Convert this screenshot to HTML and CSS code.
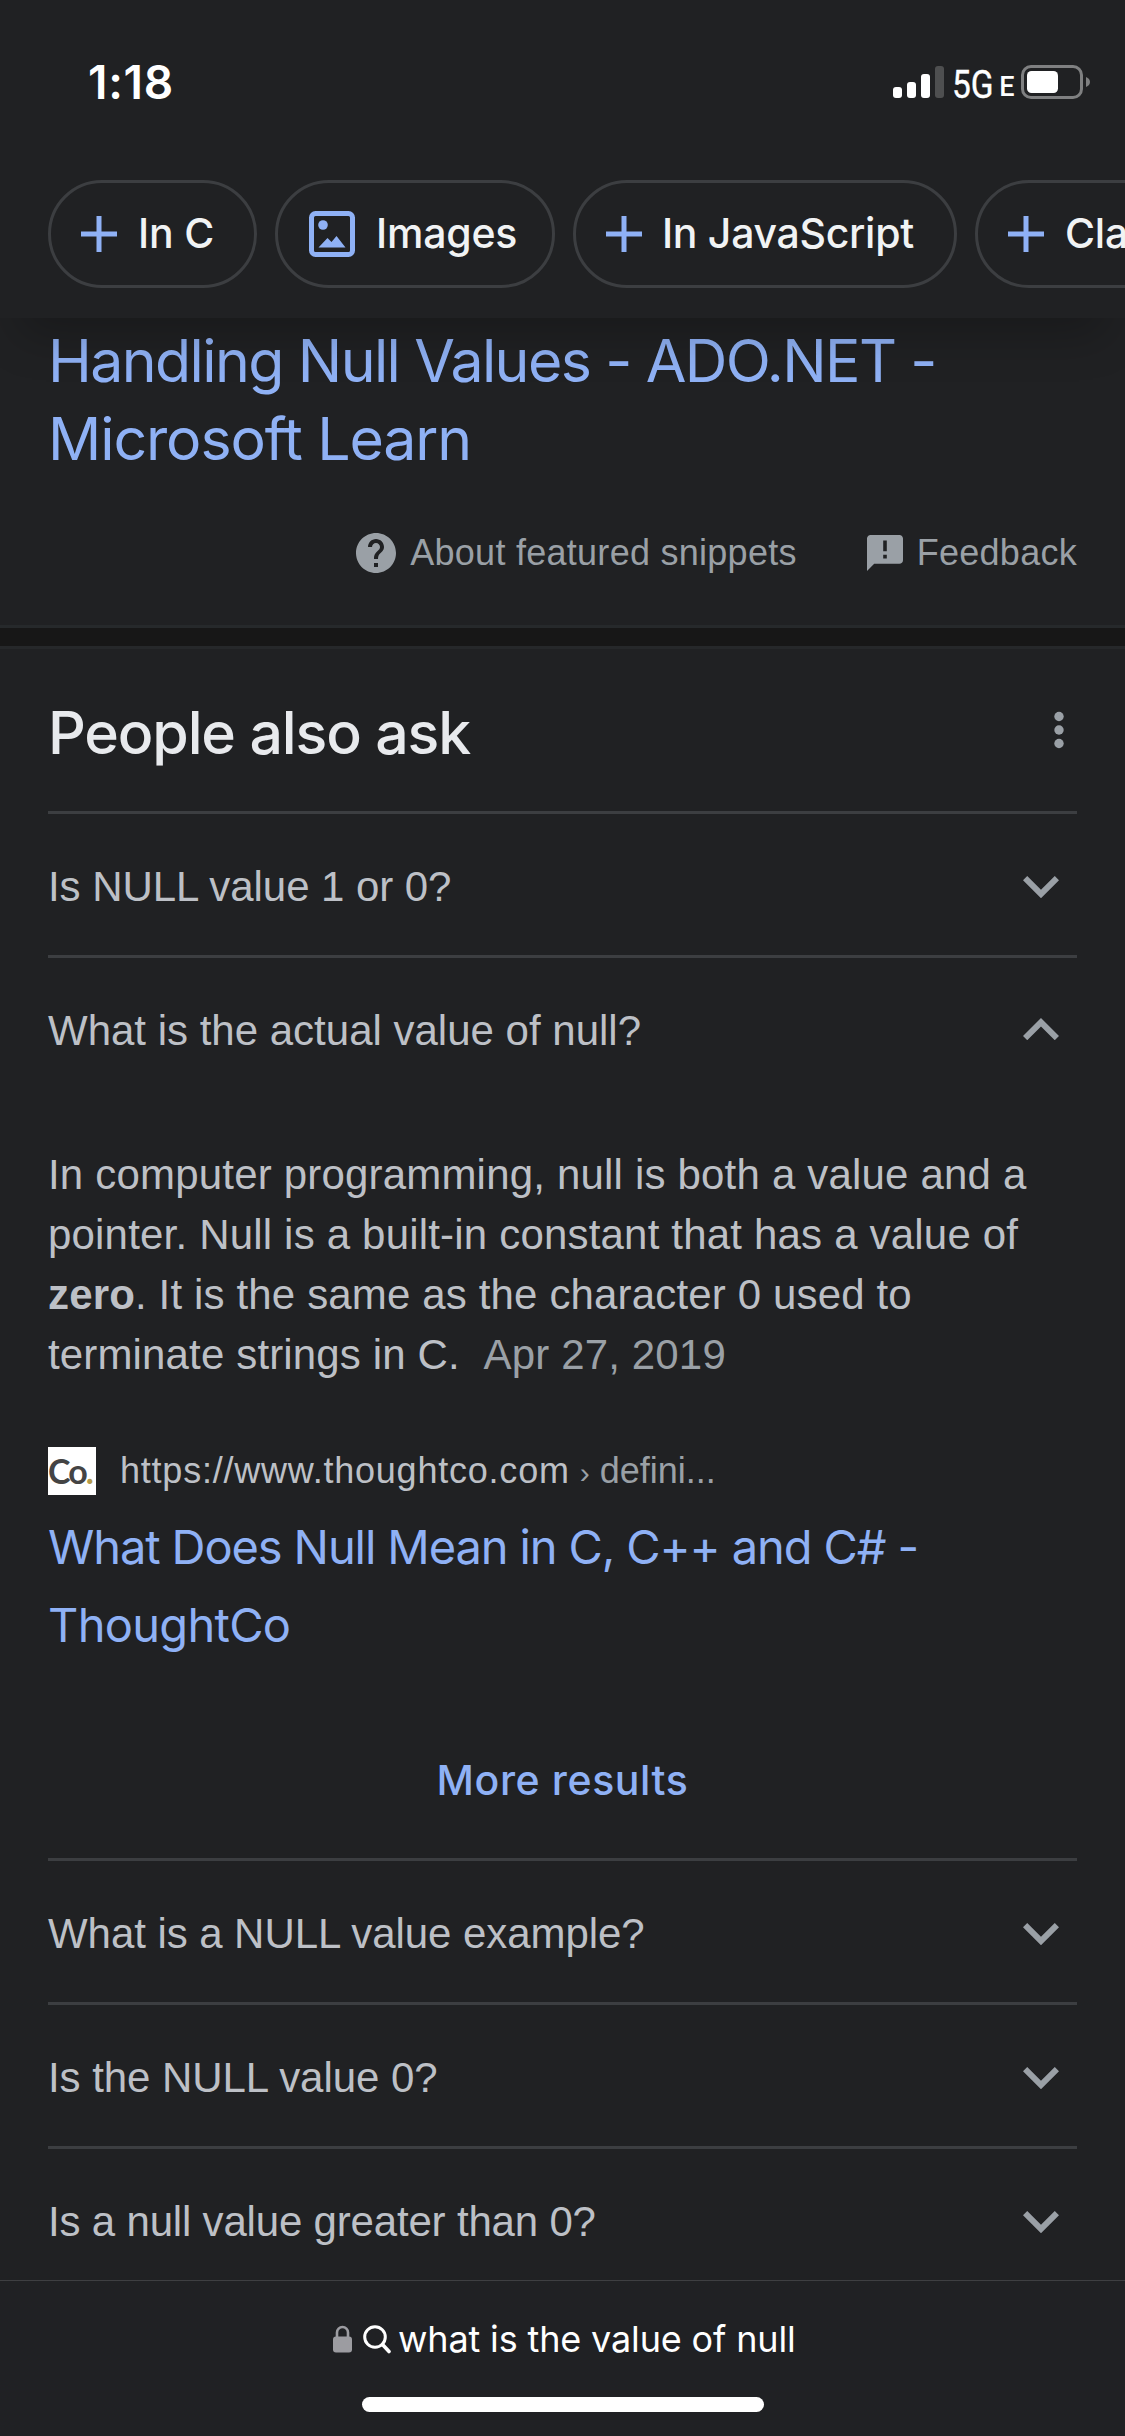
FILE: index.html
```html
<!DOCTYPE html>
<html lang="en">
<head>
<meta charset="utf-8">
<title>what is the value of null</title>
<link rel="stylesheet" href="styles.css">
</head>
<body>
<div class="screen">
  <header class="top">
    <div class="status">
      <span class="clock">1:18</span>
      <div class="indicators">
        <svg class="signal" width="52" height="34" viewBox="0 0 52 34" fill="#fff">
          <rect x="0" y="22" width="9" height="11" rx="3"/>
          <rect x="14" y="17" width="9" height="16" rx="3"/>
          <rect x="28" y="9" width="9" height="24" rx="3"/>
          <rect x="42" y="1" width="9" height="32" rx="3" fill="#4e4f50"/>
        </svg>
        <span class="network">5G</span><span class="network-e">E</span>
        <svg class="battery" width="70" height="34" viewBox="0 0 70 34">
          <rect x="1.5" y="1.5" width="59" height="31" rx="8.5" fill="none" stroke="#7f8081" stroke-width="3"/>
          <rect x="6" y="6" width="31" height="22" rx="4.5" fill="#fff"/>
          <path d="M65 12c2.600 1 4 2.800 4 5s-1.400 4-4 5z" fill="#7f8081"/>
        </svg>
      </div>
    </div>
    <nav class="chips">
      <a class="chip chip-c"><svg class="plus" viewBox="0 0 36 36"><path d="M18 0v36M0 18h36"/></svg><span>In C</span></a>
      <a class="chip chip-images">
        <svg class="picture" viewBox="0 0 46 46">
          <rect x="2.500" y="2.500" width="41" height="41" rx="4" fill="none" stroke="#8fb1f5" stroke-width="5"/>
          <circle cx="14" cy="14" r="4.800" fill="#8fb1f5"/>
          <path d="M9.500 36.500l9-9.500 4 4 5-6 9 11.500z" fill="#8fb1f5"/>
        </svg><span>Images</span></a>
      <a class="chip chip-js"><svg class="plus" viewBox="0 0 36 36"><path d="M18 0v36M0 18h36"/></svg><span>In JavaScript</span></a>
      <a class="chip chip-class"><svg class="plus" viewBox="0 0 36 36"><path d="M18 0v36M0 18h36"/></svg><span>Class</span></a>
    </nav>
  </header>

  <main>
    <section class="snippet">
      <a class="snippet-title"><span class="t1">Handling Null Values - ADO.NET -</span><br><span class="t2">Microsoft Learn</span></a>
      <div class="snippet-links">
        <a class="about"><svg width="40" height="40" viewBox="2 2 20 20" fill="#9aa0a6"><path d="M12 2C6.480 2 2 6.480 2 12s4.480 10 10 10 10-4.480 10-10S17.520 2 12 2zm1 17h-2v-2h2v2zm2.070-7.750l-.9.920C13.450 12.900 13 13.500 13 15h-2v-.5c0-1.100.45-2.100 1.170-2.830l1.240-1.260c.37-.36.59-.86.59-1.410 0-1.100-.9-2-2-2s-2 .9-2 2H8c0-2.210 1.790-4 4-4s4 1.790 4 4c0 .88-.36 1.680-.93 2.250z"/></svg><span>About featured snippets</span></a>
        <a class="feedback"><svg width="36" height="36" viewBox="2 2 20 20" fill="#9aa0a6"><path d="M20 2H4c-1.100 0-2 .9-2 2v18l4-4h14c1.100 0 2-.9 2-2V4c0-1.100-.9-2-2-2zm-7 13h-2v-2h2v2zm0-4h-2V5h2v6z"/></svg><span>Feedback</span></a>
      </div>
    </section>

    <section class="paa">
      <div class="paa-head">
        <h2>People also ask</h2>
        <svg width="10" height="38" viewBox="0 0 10 38" fill="#9aa0a6"><circle cx="5" cy="5.500" r="4.700"/><circle cx="5" cy="19" r="4.700"/><circle cx="5" cy="32.500" r="4.700"/></svg>
      </div>
      <div class="question"><span>Is NULL value 1 or 0?</span><svg class="chevron" viewBox="6 8.590 12 7.410"><path d="M16.590 8.590L12 13.170 7.410 8.590 6 10l6 6 6-6z"/></svg></div>
      <div class="question open"><span>What is the actual value of null?</span><svg class="chevron up" viewBox="6 8 12 7.410"><path d="M12 8l-6 6 1.410 1.410L12 10.830l4.590 4.580L18 14z"/></svg></div>
      <div class="answer">
        <p class="text"><span class="l1">In computer programming, null is both a value and a</span><br><span class="l2">pointer. Null is a built-in constant that has a value of</span><br><span class="l3"><b>zero</b>. It is the same as the character 0 used to</span><br><span class="l4">terminate strings in C. <span class="date">&nbsp;Apr 27, 2019</span></span></p>
        <div class="source">
          <div class="favicon"><span>Co<i>.</i></span></div>
          <span class="url">https://www.thoughtco.com</span><span class="path"><span class="sep">›</span>defini...</span>
        </div>
        <a class="result-title"><span class="r1">What Does Null Mean in C, C++ and C# -</span><br><span class="r2">ThoughtCo</span></a>
        <a class="more"><span>More results</span></a>
      </div>
      <div class="question"><span>What is a NULL value example?</span><svg class="chevron" viewBox="6 8.590 12 7.410"><path d="M16.590 8.590L12 13.170 7.410 8.590 6 10l6 6 6-6z"/></svg></div>
      <div class="question"><span>Is the NULL value 0?</span><svg class="chevron" viewBox="6 8.590 12 7.410"><path d="M16.590 8.590L12 13.170 7.410 8.590 6 10l6 6 6-6z"/></svg></div>
      <div class="question tight"><span>Is a null value greater than 0?</span><svg class="chevron" viewBox="6 8.590 12 7.410"><path d="M16.590 8.590L12 13.170 7.410 8.590 6 10l6 6 6-6z"/></svg></div>
    </section>
  </main>

  <footer class="bottom">
    <div class="address">
      <svg class="lock" width="19" height="28" viewBox="0 0 19 28"><path d="M4 13V7.500a5.500 5.500 0 0 1 11 0V13" fill="none" stroke="#9c9ca1" stroke-width="2.600"/><rect x="0" y="11.500" width="19" height="16" rx="3" fill="#9c9ca1"/></svg>
      <svg class="search" width="28" height="29" viewBox="0 0 28 29" fill="none" stroke="#fff" stroke-width="3"><circle cx="12" cy="12" r="10.300"/><path d="M19.500 19.500l6.500 7" stroke-linecap="round" stroke-width="3.600"/></svg>
      <span>what is the value of null</span>
    </div>
    <div class="home"></div>
  </footer>
</div>
</body>
</html>
```
FILE: styles.css
```css
* { box-sizing: border-box; }
body { margin: 0; background: #202123; }
.screen {
  width: 1125px;
  height: 2436px;
  overflow: hidden;
  display: flex;
  flex-direction: column;
  background: #202123;
  font-family: "Liberation Sans", Arial, sans-serif;
  color: #bdc0c6;
  white-space: nowrap;
}
svg { display: block; flex: none; }

.top {
  position: relative;
  z-index: 1;
  height: 318px;
  flex: none;
  overflow: hidden;
  background: #202123;
  box-shadow: 0 36px 44px -20px rgba(0, 0, 0, 0.24);
}
.status {
  height: 180px;
  padding: 65px 34px 0 88px;
  display: flex;
  justify-content: space-between;
  align-items: flex-start;
  color: #fff;
  font-family: Inter, sans-serif;
}
.clock { font-size: 46px; font-weight: 600; line-height: 34px; letter-spacing: 0.7px; }
.indicators { display: flex; height: 34px; width: 198px; }
.network {
  width: 48px;
  margin-left: 7px;
  font-family: Roboto, sans-serif;
  font-size: 38px;
  font-weight: 400;
  -webkit-text-stroke: 0.4px #fff;
  line-height: 40px;
  transform: scaleX(0.88);
  transform-origin: left;
}
.network-e { width: 22px; font-family: Roboto, sans-serif; font-size: 27px; font-weight: 500; line-height: 45px; }

.chips { display: flex; gap: 18px; padding-left: 48px; }
.chip {
  height: 108px;
  flex: none;
  display: flex;
  align-items: center;
  border: 3px solid #3c3e41;
  border-radius: 54px;
  padding-left: 30px;
  font-family: Inter, sans-serif;
  font-size: 41px;
  font-weight: 500;
  letter-spacing: -0.2px;
  color: #f1f3f4;
}
.chip span { position: relative; top: -1px; }
.chip-c { width: 209px; }
.chip-images { width: 280px; padding-left: 31px; }
.chip-js { width: 384px; letter-spacing: -0.3px; }
.chip-js span { left: -1px; }
.chip-class { width: 260px; }
.plus { width: 36px; height: 36px; margin-right: 21px; stroke: #8fb1f5; stroke-width: 5; }
.picture { width: 46px; height: 46px; margin-right: 21px; }

.snippet {
  height: 310px;
  padding: 4px 48px 0;
  border-bottom: 3px solid #26292b;
}
.snippet-title {
  display: block;
  font-family: Inter, sans-serif;
  font-size: 59px;
  line-height: 78px;
  color: #8fb1f5;
}
.t1 { letter-spacing: -1.6px; }
.t2 { letter-spacing: -1.1px; }
.snippet-links {
  display: flex;
  justify-content: flex-end;
  margin-top: 53px;
  height: 44px;
  font-size: 36px;
  letter-spacing: 0.27px;
  color: #9aa0a6;
}
.snippet-links a { display: flex; align-items: center; }
.about svg { margin-right: 14px; }
.feedback { margin-left: 70px; }
.feedback svg { margin-right: 14px; }

.paa { border-top: 18px solid #171717; padding: 0 48px; box-shadow: inset 0 3px #26282a; }
.paa-head { height: 165px; padding: 2px 13px 0 0; display: flex; align-items: center; justify-content: space-between; }
.paa-head h2 {
  margin: 7px 0 0;
  font-family: Inter, sans-serif;
  font-size: 59px;
  font-weight: 500;
  line-height: 78px;
  letter-spacing: -1.15px;
  color: #e8eaed;
}
.question {
  height: 144px;
  border-top: 3px solid #3c3e41;
  padding: 4px 18px 0 0;
  display: flex;
  align-items: center;
  justify-content: space-between;
  font-size: 42px;
  letter-spacing: -0.06px;
}
.question.open { letter-spacing: 0; }
.question.tight { letter-spacing: -0.18px; }
.chevron { width: 36px; height: 22.23px; margin-top: 1px; fill: #9aa0a6; }
.chevron.up { margin: 0 0 3px; }

.answer { height: 759px; padding-top: 46px; }
.text { margin: 0; font-size: 42px; line-height: 60px; letter-spacing: 0.19px; }
.l3, .l4 { letter-spacing: 0.15px; }
.date { color: #9aa0a6; }
.source { display: flex; align-items: center; height: 48px; margin-top: 62px; font-size: 36px; }
.favicon {
  width: 48px;
  height: 48px;
  background: #fff;
  color: #444;
  font: 700 34px/48px Lato, sans-serif;
  letter-spacing: -2px;
  overflow: hidden;
}
.favicon i { color: #b59b4a; font-style: normal; }
.url { margin-left: 24px; letter-spacing: 0.78px; }
.path { color: #9aa0a6; }
.sep { display: inline-block; width: 30px; font-size: 30px; text-align: center; }
.result-title {
  display: block;
  margin-top: 13px;
  font-family: Inter, sans-serif;
  font-size: 47px;
  line-height: 78px;
  color: #8fb1f5;
}
.r1 { letter-spacing: -1.1px; }
.r2 { letter-spacing: -0.7px; }
.more {
  display: flex;
  justify-content: center;
  margin-top: 86px;
  font-family: Inter, sans-serif;
  font-size: 41px;
  font-weight: 500;
  line-height: 60px;
  letter-spacing: 0.6px;
  color: #8fb1f5;
}

.bottom {
  position: absolute;
  left: 0;
  top: 2280px;
  width: 1125px;
  height: 156px;
  border-top: 1px solid #3e3f42;
  background: #202124;
  color: #fff;
}
.address {
  display: flex;
  align-items: flex-start;
  padding: 44px 0 0 333px;
  height: 116px;
  font-family: Inter, sans-serif;
  font-size: 36px;
  letter-spacing: -0.15px;
}
.address span { line-height: 28px; margin-left: 7px; }
.search { margin-left: 11px; }
.home { width: 402px; height: 15px; margin-left: 362px; border-radius: 8px; background: #fff; }
```
